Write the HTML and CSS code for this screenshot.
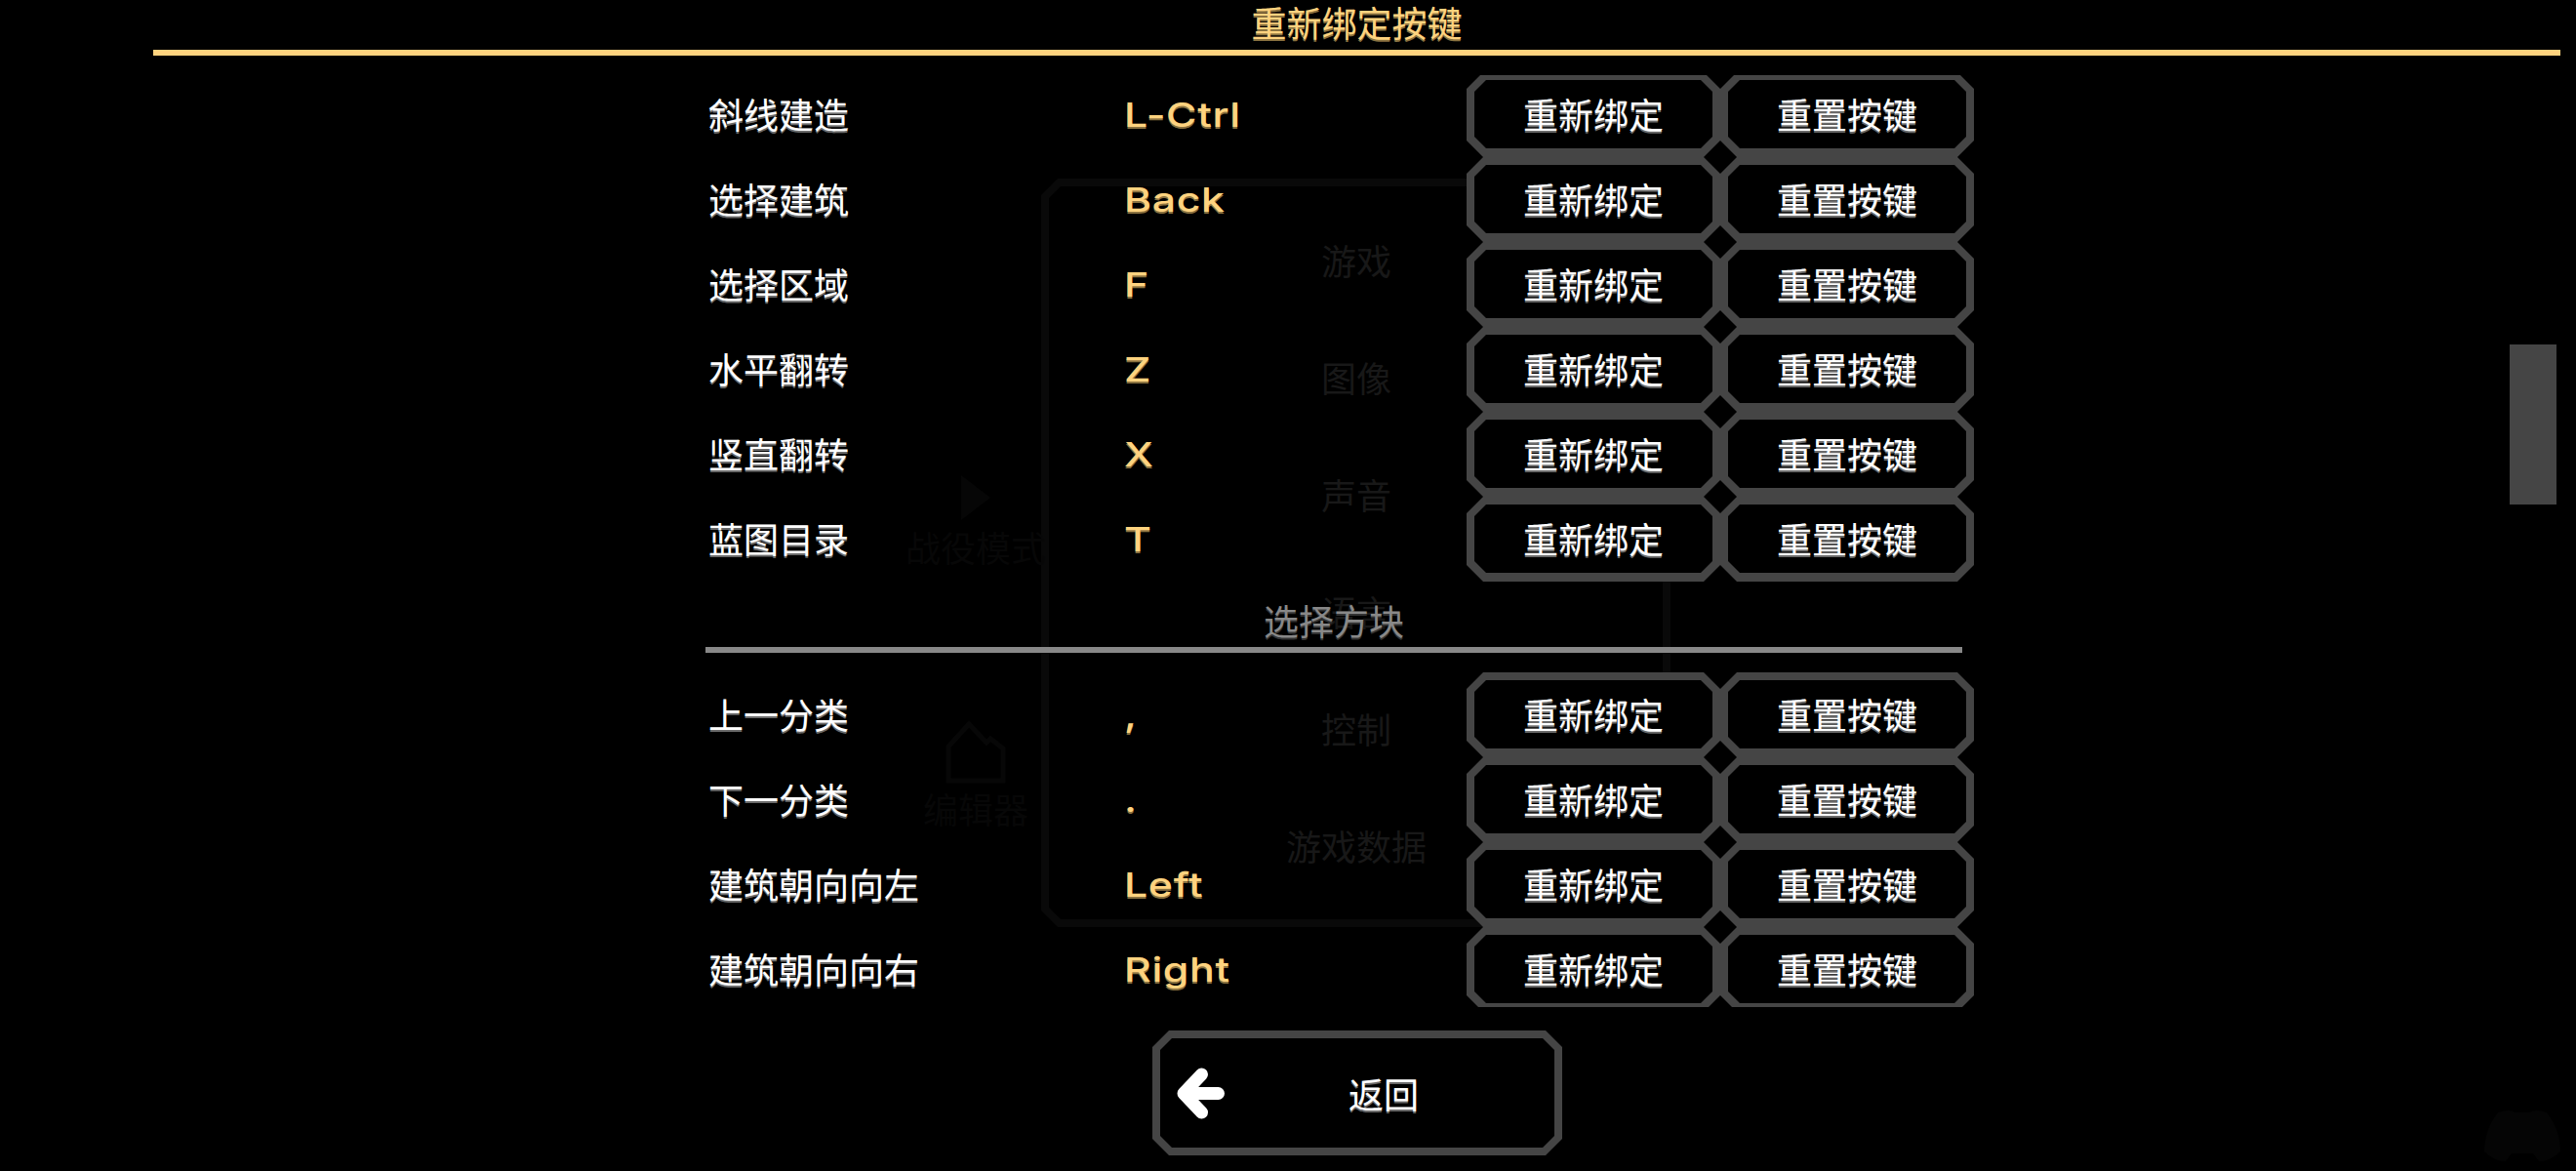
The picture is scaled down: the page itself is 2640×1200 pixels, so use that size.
FILE: index.html
```html
<!DOCTYPE html>
<html lang="zh-CN">
<head>
<meta charset="utf-8">
<title>重新绑定按键</title>
<link rel="stylesheet" href="styles.css">
</head>
<body>
<div class="ghost" aria-hidden="true">
  <div class="ghost-panel">
    <div class="ghost-list">
      <span>游戏</span><span>图像</span><span>声音</span><span>语言</span><span>控制</span><span>游戏数据</span>
    </div>
  </div>
  <div class="ghost-item ghost-campaign">
    <svg class="ghost-icon" width="34" height="50" viewBox="0 0 34 50"><path d="M2 2 L32 25 L2 48 Z" fill="#060606"/></svg>
    <span>战役模式</span>
  </div>
  <div class="ghost-item ghost-editor">
    <svg class="ghost-icon" width="62" height="66" viewBox="0 0 62 66"><path d="M3 63 V28 L24 5 L42 24 L46 20 L59 30 V63 Z" fill="none" stroke="#070707" stroke-width="5"/></svg>
    <span>编辑器</span>
  </div>
  <svg class="ghost-discord" width="82" height="56" viewBox="0 0 82 56"><path d="M16 4 Q28 0 34 4 H48 Q54 0 66 4 Q80 22 80 44 Q70 54 58 54 L52 46 H30 L24 54 Q12 54 2 44 Q2 22 16 4 Z" fill="#050505"/></svg>
</div>

<main class="screen">
  <header class="title-bar">
    <h1 class="title">重新绑定按键</h1>
  </header>

  <div class="pane">
    <div class="pane-inner">
      <div class="row"><span class="label">斜线建造</span><span class="key">L-Ctrl</span><button class="btn">重新绑定</button><button class="btn">重置按键</button></div>
      <div class="row"><span class="label">选择建筑</span><span class="key">Back</span><button class="btn">重新绑定</button><button class="btn">重置按键</button></div>
      <div class="row"><span class="label">选择区域</span><span class="key">F</span><button class="btn">重新绑定</button><button class="btn">重置按键</button></div>
      <div class="row"><span class="label">水平翻转</span><span class="key">Z</span><button class="btn">重新绑定</button><button class="btn">重置按键</button></div>
      <div class="row"><span class="label">竖直翻转</span><span class="key">X</span><button class="btn">重新绑定</button><button class="btn">重置按键</button></div>
      <div class="row"><span class="label">蓝图目录</span><span class="key">T</span><button class="btn">重新绑定</button><button class="btn">重置按键</button></div>

      <div class="section">
        <h2 class="section-title">选择方块</h2>
      </div>

      <div class="row"><span class="label">上一分类</span><span class="key">,</span><button class="btn">重新绑定</button><button class="btn">重置按键</button></div>
      <div class="row"><span class="label">下一分类</span><span class="key">.</span><button class="btn">重新绑定</button><button class="btn">重置按键</button></div>
      <div class="row"><span class="label">建筑朝向向左</span><span class="key">Left</span><button class="btn">重新绑定</button><button class="btn">重置按键</button></div>
      <div class="row"><span class="label">建筑朝向向右</span><span class="key">Right</span><button class="btn">重新绑定</button><button class="btn">重置按键</button></div>
    </div>
  </div>

  <div class="scroll-knob"></div>

  <footer class="footer">
    <button class="btn back">
      <svg class="back-icon" width="49" height="53" viewBox="0 0 49 53"><path d="M42.5 26.5 H8 M25.5 7 L7 26.5 L25.5 46" fill="none" stroke="#fff" stroke-width="13" stroke-linecap="round" stroke-linejoin="round"/></svg>
      <span class="back-label">返回</span>
    </button>
  </footer>
</main>
</body>
</html>
```

FILE: styles.css
```css
* { box-sizing: border-box; }

html, body {
  margin: 0;
  height: 1200px;
  background: #000;
  overflow: hidden;
}

body {
  position: relative;
  font-family: "Noto Sans CJK SC", "Noto Sans", sans-serif;
  font-size: 36px;
  color: #fff;
  text-shadow: 0 2px 0 #6a6a6a;
}

/* faint settings menu showing through behind the dialog */
.ghost {
  position: absolute;
  inset: 0;
  color: #181818;
  text-shadow: none;
}

.ghost-panel {
  position: absolute;
  left: 1067px;
  top: 183px;
  width: 645px;
  height: 767px;
  background: #090909;
  clip-path: polygon(17px 0, calc(100% - 17px) 0, 100% 17px, 100% calc(100% - 17px), calc(100% - 17px) 100%, 17px 100%, 0 calc(100% - 17px), 0 17px);
}

.ghost-panel::before {
  content: "";
  position: absolute;
  inset: 8px;
  background: #000;
  clip-path: polygon(12px 0, calc(100% - 12px) 0, 100% 12px, 100% calc(100% - 12px), calc(100% - 12px) 100%, 12px 100%, 0 calc(100% - 12px), 0 12px);
}

.ghost-list {
  position: relative;
  display: flex;
  flex-direction: column;
  align-items: center;
  padding: 23px 2px 0 3px;
}

.ghost-list span {
  height: 120px;
  line-height: 120px;
}

.ghost-item {
  position: absolute;
  display: flex;
  flex-direction: column;
  align-items: center;
  color: #070707;
  line-height: 50px;
}

.ghost-icon { display: block; }

.ghost-campaign {
  left: 928px;
  top: 485px;
}

.ghost-editor {
  left: 946px;
  top: 737px;
}

.ghost-discord {
  position: absolute;
  left: 2544px;
  top: 1136px;
}

/* dialog */
.screen {
  position: relative;
  display: flex;
  flex-direction: column;
  height: 1200px;
}

.title-bar {
  height: 57px;
  margin: 0 16px 20px 157px;
  border-bottom: 6px solid #ffd37f;
  text-align: center;
}

.title {
  margin: 0;
  font-size: 36px;
  font-weight: 400;
  line-height: 45px;
  color: #ffd37f;
  text-shadow: 0 2px 0 #8a7240;
}

.pane {
  height: 955px;
  overflow: hidden;
}

.pane-inner {
  margin: -3px 0 0 723px;
  width: 1300px;
}

.row {
  display: flex;
  align-items: center;
  height: 87px;
}

.label {
  width: 429px;
  padding: 0 0 4px 3px;
  white-space: nowrap;
}

.key {
  width: 351px;
  font-family: "Inter", "DejaVu Sans", sans-serif;
  font-weight: 500;
  font-size: 34px;
  letter-spacing: 0.5px;
  color: #ffd37f;
  text-shadow: 0 2px 0 #8a7240;
  transform: scaleX(1.26);
  transform-origin: left center;
}

.btn {
  position: relative;
  z-index: 0;
  display: flex;
  align-items: center;
  justify-content: center;
  width: 260px;
  height: 87px;
  padding: 0 0 4px;
  border: 0;
  background: #454545;
  font: inherit;
  color: #fff;
  text-shadow: inherit;
  clip-path: polygon(17px 0, calc(100% - 17px) 0, 100% 17px, 100% calc(100% - 17px), calc(100% - 17px) 100%, 17px 100%, 0 calc(100% - 17px), 0 17px);
}

.btn::before {
  content: "";
  position: absolute;
  inset: 8px 8px 9px 8px;
  z-index: -1;
  background: #000;
  clip-path: polygon(12px 0, calc(100% - 12px) 0, 100% 12px, 100% calc(100% - 12px), calc(100% - 12px) 100%, 12px 100%, 0 calc(100% - 12px), 0 12px);
}

.section {
  height: 93px;
  padding-top: 6px;
  margin-right: 12px;
}

.section-title {
  height: 67px;
  margin: 0;
  border-bottom: 6px solid #888;
  padding-top: 6px;
  font-size: 36px;
  font-weight: 400;
  line-height: 55px;
  text-align: center;
  color: #888;
  text-shadow: 0 2px 0 #333;
}

.scroll-knob {
  position: absolute;
  left: 2572px;
  top: 353px;
  width: 48px;
  height: 164px;
  background: #454545;
}

.footer {
  display: flex;
  justify-content: center;
  margin: 24px 0 0 141px;
  width: 2500px;
}

.back {
  justify-content: flex-start;
  width: 420px;
  height: 128px;
  padding: 0 20px 0 25px;
}

.back::before {
  inset: 8px;
}

.back-icon {
  flex: none;
  display: block;
}

.back-label {
  flex: 1;
  text-align: center;
}
```
